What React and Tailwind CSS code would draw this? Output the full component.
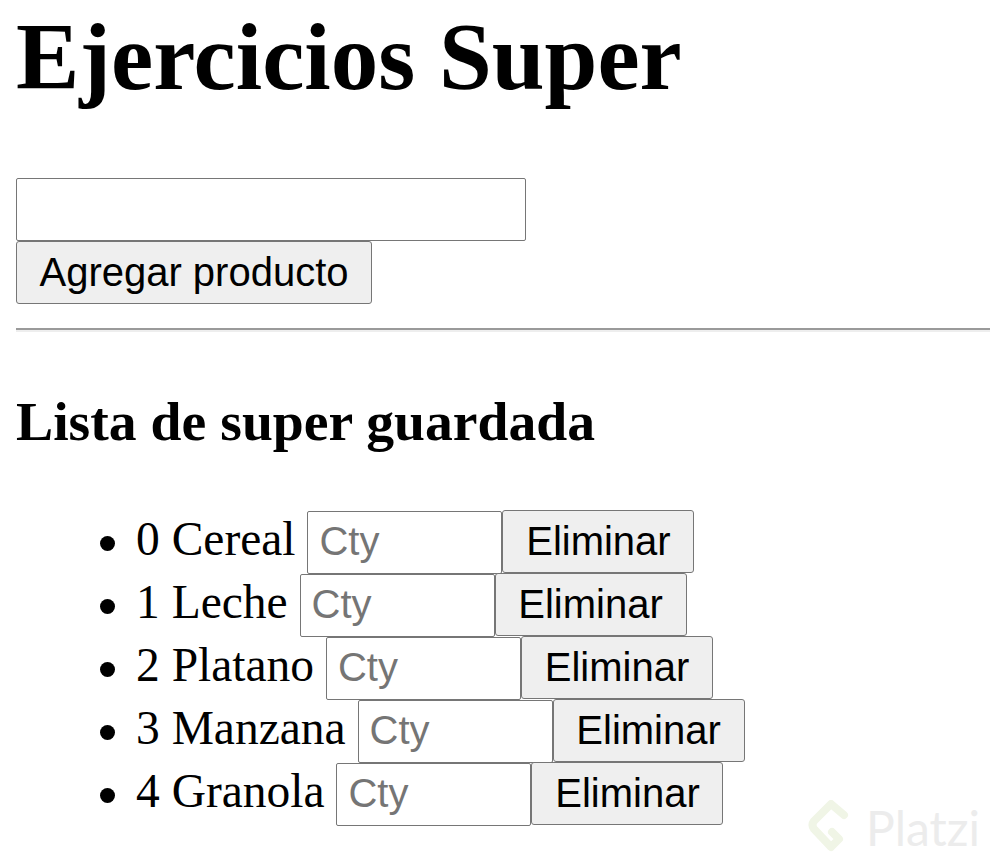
import React, { useState } from "react";

const productos = ["Cereal", "Leche", "Platano", "Manzana", "Granola"];

const PlatziMark = () => (
  <div className="absolute right-[10px] bottom-[10px] flex items-center gap-[12px] pointer-events-none">
    <svg width="46" height="56" viewBox="0 0 46 56" fill="none">
      <path
        d="M36 15 L23 4 L6 21 Q3 25 6 29 L23 47 L31 39 L24 32"
        stroke="#f0f5e6"
        strokeWidth="8"
        strokeLinecap="round"
        strokeLinejoin="round"
      />
    </svg>
    <span className="font-['Lato',sans-serif] text-[48px] leading-none text-[#ececec]">
      Platzi
    </span>
  </div>
);

const App = () => {
  const [producto, setProducto] = useState("");

  return (
    <div className="relative min-h-[866px] bg-white pl-[16px] text-black font-['Liberation_Serif',serif]">
      <h1 className="pt-[5px] text-[95px] leading-[105px] font-bold">
        Ejercicios Super
      </h1>

      <input
        value={producto}
        onChange={(e) => setProducto(e.target.value)}
        className="block mt-[68px] w-[510px] h-[63px] border border-[#767676] rounded-[2px] bg-white px-[6px] font-['Liberation_Sans',sans-serif] text-[40px] leading-[46px] outline-none"
      />
      <button className="block w-[356px] pt-[7px] pb-[8px] leading-[46px] border border-[#767676] rounded-[3px] bg-[#efefef] font-['Liberation_Sans',sans-serif] text-[40px] text-black">
        Agregar producto
      </button>

      <hr className="mt-[24px] border-0 border-t-2 border-b-2 border-t-[#9a9a9a] border-b-[#eeeeee]" />

      <h3 className="mt-[58px] text-[55.7px] leading-[62px] font-bold">
        Lista de super guardada
      </h3>

      <ul className="mt-[58px]">
        {productos.map((p, i) => (
          <li key={i} className="flex items-baseline h-[63px]">
            <span className="self-start mt-[26px] ml-[84px] mr-[21px] w-[15px] h-[15px] rounded-full bg-black shrink-0" />
            <span className="text-[47.5px] leading-none whitespace-pre">{`${i} ${p} `}</span>
            <input
              placeholder="Cty"
              className="w-[195px] h-[63px] pt-[7px] pb-[8px] pl-[11px] pr-[6px] leading-[46px] border border-[#767676] rounded-[2px] bg-white font-['Liberation_Sans',sans-serif] text-[40px] placeholder:text-[#757575] outline-none"
            />
            <button className="w-[192px] pt-[7px] pb-[8px] leading-[46px] border border-[#767676] rounded-[3px] bg-[#efefef] font-['Liberation_Sans',sans-serif] text-[40px] text-black">
              Eliminar
            </button>
          </li>
        ))}
      </ul>

      <PlatziMark />
    </div>
  );
};

export default App;
